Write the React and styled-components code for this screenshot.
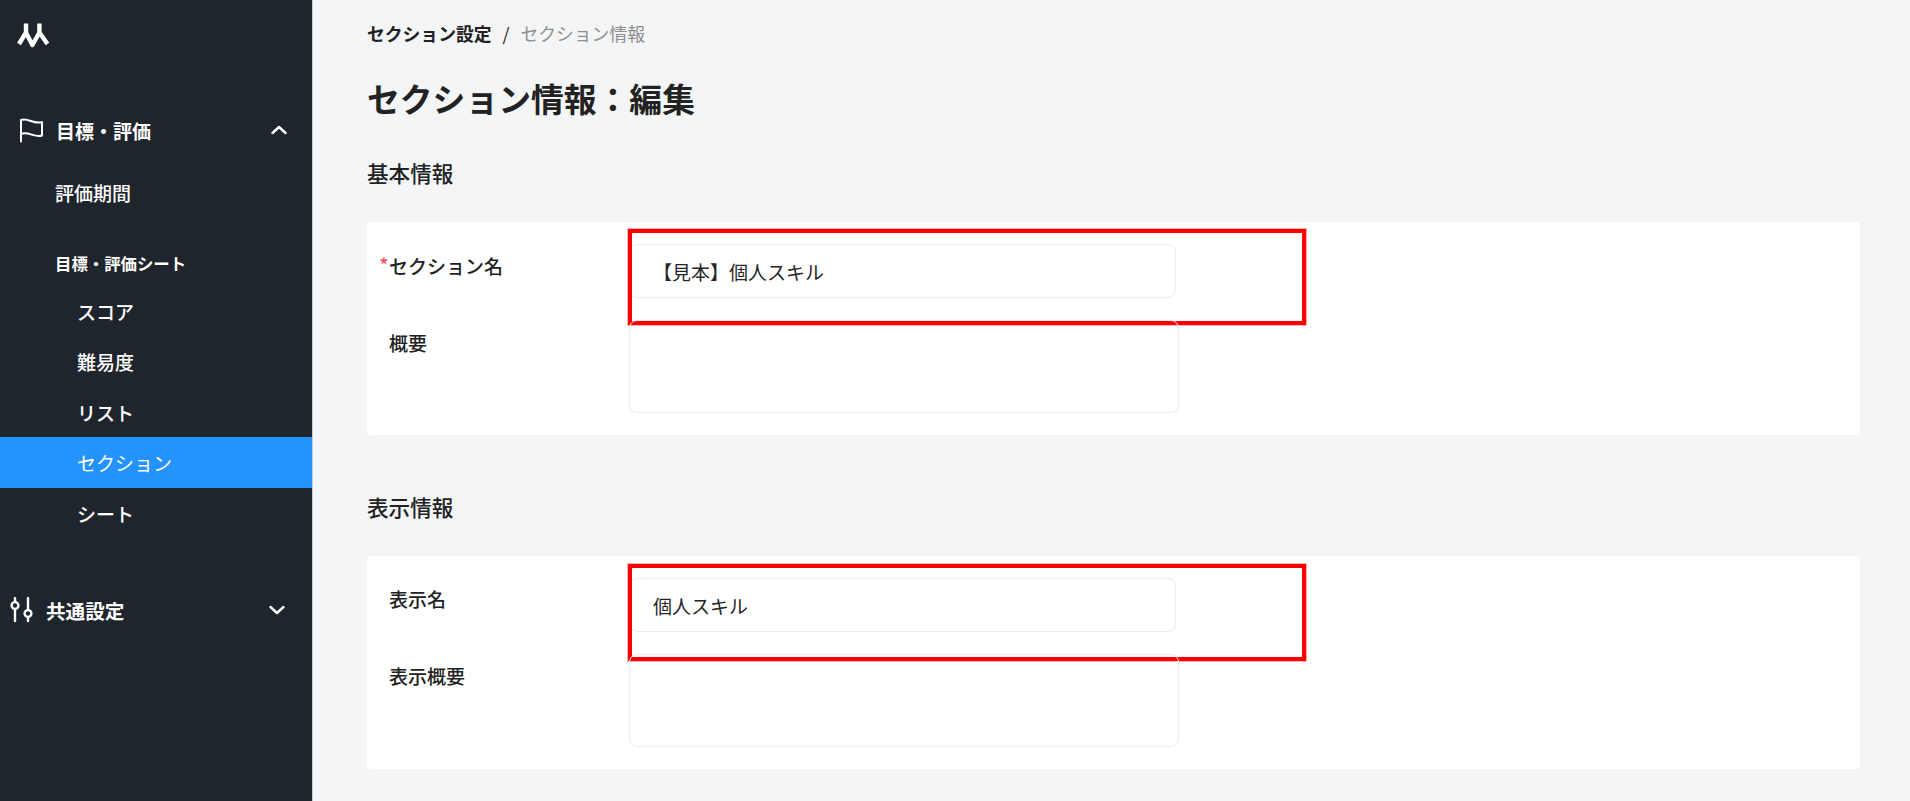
import React from 'react';
import styled, { createGlobalStyle } from 'styled-components';

const GlobalStyle = createGlobalStyle`
  html, body {
    margin: 0;
    padding: 0;
    background: #f4f5f7;
  }
  body {
    font-family: "Noto Sans CJK JP", "Noto Sans", sans-serif;
    color: #222;
  }
`;

const Page = styled.div`
  display: flex;
  height: 801px;
  overflow: hidden;
`;

const Sidebar = styled.aside`
  flex: 0 0 312px;
  display: flex;
  flex-direction: column;
  background: #1f252d;
  border-right: 1px solid #c9ccd1;
  color: #fff;
`;

const LogoWrap = styled.div`
  height: 104px;
  padding: 21px 0 0 17px;
  box-sizing: border-box;
`;

const GroupHead = styled.div`
  display: flex;
  align-items: center;
  height: 52px;
  padding-left: ${({ $inset }) => $inset}px;
  padding-right: ${({ $end }) => $end}px;
  font-size: ${({ $size }) => $size}px;
  font-weight: 700;
  svg.lead {
    flex: none;
  }
  span {
    flex: 1;
    margin-left: ${({ $gap }) => $gap}px;
  }
`;

const NavLink = styled.div`
  height: 50px;
  line-height: 52px;
  margin-top: 11px;
  padding-left: 55px;
  font-size: 19px;
  font-weight: 500;
`;

const SubHead = styled.div`
  height: 47.5px;
  line-height: 50px;
  margin-top: 21px;
  padding-left: 55px;
  font-size: 16.4px;
  font-weight: 700;
`;

const SubItem = styled.div`
  height: 50.5px;
  line-height: 52px;
  padding-left: 77px;
  font-size: 19px;
  font-weight: ${({ $active }) => ($active ? 400 : 500)};
  background: ${({ $active }) => ($active ? '#2593fc' : 'transparent')};
`;

const NavGap = styled.div`
  height: 46px;
`;

const Main = styled.main`
  flex: 1;
  min-width: 0;
  padding: 0 50px 0 54px;
`;

const Crumbs = styled.div`
  display: flex;
  align-items: center;
  gap: 11px;
  height: 66px;
  font-size: 17.8px;
  font-weight: 700;
  i {
    font-style: normal;
    font-weight: 400;
  }
  em {
    font-style: normal;
    font-weight: 400;
    color: #8e8e8e;
  }
`;

const Title = styled.h1`
  margin: 0;
  height: 66px;
  line-height: 63px;
  font-size: 32.8px;
  font-weight: 700;
  color: #222;
`;

const SectionTitle = styled.h2`
  margin: 0;
  height: ${({ $tall }) => ($tall ? 121 : 90)}px;
  padding-top: ${({ $tall }) => ($tall ? 51 : 20)}px;
  box-sizing: border-box;
  font-size: 21.6px;
  line-height: 42px;
  font-weight: 500;
  color: #222;
`;

const Card = styled.section`
  display: grid;
  grid-template-columns: 262px 1fr;
  row-gap: 22px;
  padding: 22px 0;
  background: #fff;
  border-radius: 4px;
`;

const Label = styled.div`
  position: relative;
  padding: ${({ $top }) => $top}px 0 0 22px;
  font-size: 19px;
  line-height: 30px;
  font-weight: 500;
`;

const Star = styled.b`
  position: absolute;
  left: 12px;
  top: 9px;
  font-size: 21px;
  line-height: 24px;
  font-weight: 400;
  color: #ff4d4f;
`;

const Field = styled.div`
  position: relative;
`;

const InputBox = styled.div`
  display: flex;
  align-items: center;
  box-sizing: border-box;
  width: 547px;
  height: 54px;
  padding-left: 23px;
  border: 1px solid #e8ebef;
  border-radius: 8px;
  font-size: 19px;
  color: #262626;
`;

const TextArea = styled.div`
  box-sizing: border-box;
  width: 550px;
  height: 93px;
  border: 1px solid #e8ebef;
  border-radius: 8px;
`;

const Highlight = styled.div`
  position: absolute;
  left: -1px;
  top: ${({ $top }) => $top}px;
  width: 678px;
  height: ${({ $height }) => $height}px;
  box-sizing: border-box;
  border: 4px solid #ff0000;
  box-shadow: 0 0 0 1px rgba(255, 0, 0, 0.3);
  pointer-events: none;
`;

const Logo = () => (
  <svg width="34" height="28" viewBox="17 21 34 28" fill="none" stroke="#fff" strokeWidth="4.4" strokeLinejoin="round" aria-hidden="true">
    <path d="M19 44 26 32.5V23.5M26 32.5l6.4 12.5 7-12.5V23.5M39.4 32.5 47.5 44" />
  </svg>
);

const FlagIcon = () => (
  <svg className="lead" width="24" height="26" viewBox="20 117 24 26" fill="none" stroke="#fff" strokeWidth="2" strokeLinecap="round" strokeLinejoin="round" aria-hidden="true">
    <path d="M21 141.5V120C28 117.5 34 125 42 122V135.5C35 138 28 131 21 134" />
  </svg>
);

const SliderIcon = () => (
  <svg className="lead" width="24" height="26" viewBox="9 597 24 26" fill="none" stroke="#fff" strokeWidth="2.4" strokeLinecap="round" aria-hidden="true">
    <path d="M15 598v3.5M15 609.5V621M28 598v11.5M28 617.5V621" />
    <circle cx="15" cy="605.5" r="3.4" />
    <circle cx="28" cy="613.5" r="3.4" />
  </svg>
);

const Chevron = ({ up }) => (
  <svg width="16" height="10" viewBox="0 0 16 10" fill="none" stroke="#fff" strokeWidth="2.4" strokeLinecap="round" strokeLinejoin="round" aria-hidden="true">
    <path d={up ? 'M1.5 8 8 2l6.5 6' : 'M1.5 2 8 8l6.5-6'} />
  </svg>
);

const subItems = ['スコア', '難易度', 'リスト', 'セクション', 'シート'];

const FormCard = ({ name, summary, value, required, labelTop, boxTop, boxHeight }) => (
  <Card>
    <Label $top={labelTop}>
      {required && <Star>*</Star>}
      {name}
    </Label>
    <Field>
      <InputBox>{value}</InputBox>
      <Highlight $top={boxTop} $height={boxHeight} />
    </Field>
    <Label $top={labelTop + 1}>{summary}</Label>
    <Field>
      <TextArea />
    </Field>
  </Card>
);

export default function App() {
  return (
    <>
      <GlobalStyle />
      <Page>
        <Sidebar>
          <LogoWrap>
            <Logo />
          </LogoWrap>
          <GroupHead $inset={20} $end={25} $gap={12} $size={19}>
            <FlagIcon />
            <span>目標・評価</span>
            <Chevron up />
          </GroupHead>
          <NavLink>評価期間</NavLink>
          <SubHead>目標・評価シート</SubHead>
          {subItems.map((item) => (
            <SubItem key={item} $active={item === 'セクション'}>
              {item}
            </SubItem>
          ))}
          <NavGap />
          <GroupHead $inset={9} $end={27} $gap={13} $size={19.6}>
            <SliderIcon />
            <span>共通設定</span>
            <Chevron />
          </GroupHead>
        </Sidebar>
        <Main>
          <Crumbs>
            <span>セクション設定</span>
            <i>/</i>
            <em>セクション情報</em>
          </Crumbs>
          <Title>セクション情報：編集</Title>
          <SectionTitle>基本情報</SectionTitle>
          <FormCard name="セクション名" summary="概要" value="【見本】個人スキル" required labelTop={7} boxTop={-15} boxHeight={96} />
          <SectionTitle $tall>表示情報</SectionTitle>
          <FormCard name="表示名" summary="表示概要" value="個人スキル" labelTop={6} boxTop={-14} boxHeight={97} />
        </Main>
      </Page>
    </>
  );
}
